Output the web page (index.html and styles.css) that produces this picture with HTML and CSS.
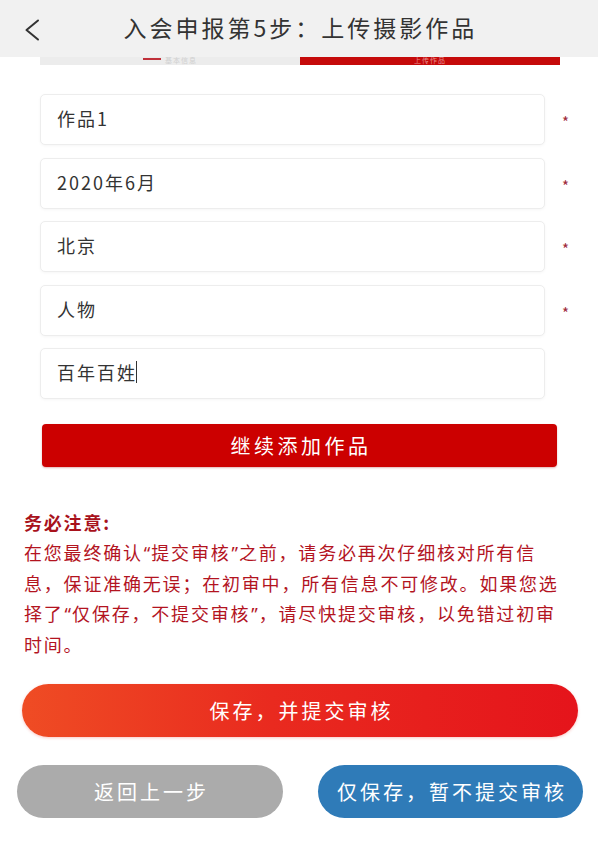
FILE: index.html
```html
<!DOCTYPE html>
<html lang="zh-CN">
<head>
<meta charset="utf-8">
<title>入会申报第5步：上传摄影作品</title>
<link rel="stylesheet" href="styles.css">
</head>
<body>
<header class="topbar">
  <span class="back">
    <svg width="16" height="22" viewBox="0 0 16 22"><polyline points="14,1.5 2.5,11 14,20.5" fill="none" stroke="#333" stroke-width="2" stroke-linecap="round" stroke-linejoin="round"/></svg>
  </span>
  <h1 class="title">入会申报第5步：上传摄影作品</h1>
</header>
<main class="page">
  <div class="tabs">
    <div class="tab tab-off"><span class="tab-mark"></span><span class="tab-label">基本信息</span></div>
    <div class="tab tab-on"><span class="tab-label">上传作品</span></div>
  </div>
  <form class="form">
    <div class="row"><div class="field">作品1</div><span class="req">*</span></div>
    <div class="row"><div class="field">2020年6月</div><span class="req">*</span></div>
    <div class="row"><div class="field">北京</div><span class="req">*</span></div>
    <div class="row"><div class="field">人物</div><span class="req">*</span></div>
    <div class="row"><div class="field">百年百姓<span class="caret"></span></div></div>
  </form>
  <div class="add-wrap"><button class="add-btn" type="button">继续添加作品</button></div>
  <section class="notice">
    <p class="notice-head">务必注意:</p>
    <p class="notice-body">
      <span class="line">在您最终确认<span class="q">“</span>提交审核<span class="q">”</span>之前，请务必再次仔细核对所有信</span>
      <span class="line">息，保证准确无误；在初审中，所有信息不可修改。如果您选</span>
      <span class="line">择了<span class="q">“</span>仅保存，不提交审核<span class="q">”</span>，请尽快提交审核，以免错过初审</span>
      <span class="line">时间。</span>
    </p>
  </section>
  <div class="main-wrap"><button class="pill primary" type="button">保存，并提交审核</button></div>
  <div class="pill-row">
    <button class="pill gray" type="button">返回上一步</button>
    <button class="pill blue" type="button">仅保存，暂不提交审核</button>
  </div>
</main>
</body>
</html>
```
FILE: styles.css
```css
* { box-sizing: border-box; }
html, body { margin: 0; padding: 0; background: #fff; }
body {
  font-family: "Noto Sans CJK SC", "Noto Sans", "Liberation Sans", sans-serif;
  color: #333;
  width: 598px;
  overflow: hidden;
}
.topbar {
  position: fixed;
  top: 0; left: 0; right: 0;
  height: 57px;
  background: #f1f1f1;
  z-index: 10;
  display: flex;
  align-items: center;
  justify-content: center;
}
.back {
  position: absolute;
  left: 24px;
  top: 19px;
  width: 16px;
  height: 22px;
  display: block;
}
.back svg { display: block; }
.title {
  margin: 0 0 2px 0;
  font-size: 23px;
  font-weight: 400;
  letter-spacing: 3px;
  color: #333;
  line-height: 1;
  padding-left: 3px;
}
.page { padding-top: 57px; }
.tabs {
  display: flex;
  margin: 0 38px 0 40px;
  height: 8px;
}
.tab {
  flex: 1;
  height: 8px;
  display: flex;
  justify-content: center;
  align-items: flex-start;
}
.tab-label {
  display: block;
  font-size: 7px;
  line-height: 7px;
  height: 7px;
  letter-spacing: 1px;
}
.tab-off { background: #ececec; color: #d0d0d0; }
.tab-on { background: #c50a0a; color: #e88e8e; }
.tab-mark {
  width: 18px; height: 2px;
  background: #c0303a;
  margin-right: 4px;
  margin-top: 1px;
  flex: none;
}
.form {
  margin: 29px 0 0 40px;
  display: flex;
  flex-direction: column;
  gap: 12.5px;
}
.row {
  display: flex;
  align-items: center;
}
.field {
  width: 505px;
  height: 51px;
  border: 1px solid #ededed;
  border-radius: 5px;
  background: #fff;
  box-shadow: 0 1px 3px rgba(0,0,0,0.04);
  display: flex;
  align-items: center;
  padding-left: 16px;
  padding-bottom: 3px;
  font-size: 18px;
  letter-spacing: 2px;
  color: #333;
}
.caret {
  display: inline-block;
  width: 1px;
  height: 22px;
  background: #333;
  margin-left: -1px;
}
.req {
  margin-left: 17px;
  font-size: 15px;
  color: #9e2a3a;
  line-height: 1;
  padding-top: 4px;
}
.add-wrap {
  margin: 25px 0 0 42px;
}
.add-btn {
  display: block;
  width: 515px;
  height: 43px;
  border: none;
  border-radius: 4px;
  background: #cc0000;
  color: #fff;
  font-family: inherit;
  font-size: 20px;
  letter-spacing: 3.5px;
  padding: 0 0 0 3px;
  box-shadow: 0 1px 2px rgba(160,0,0,0.3);
}
.notice {
  margin: 40px 0 0 24px;
  color: #b3141f;
  font-size: 18px;
  letter-spacing: 1.8px;
  line-height: 30px;
}
.notice p { margin: 0; }
.notice-head { font-weight: 700; color: #a8121c; }
.line { display: block; white-space: nowrap; }
.q { font-family: "Noto Sans", "Liberation Sans", sans-serif; letter-spacing: 0; padding: 0 1px; }
.main-wrap { margin: 25px 0 0 22px; }
.pill {
  display: block;
  height: 53px;
  border: none;
  border-radius: 27px;
  color: #fff;
  font-family: inherit;
  font-size: 20px;
  letter-spacing: 3px;
  padding: 0 0 0 3px;
}
.primary {
  width: 556px;
  background: linear-gradient(90deg, #ef4c24 0%, #e92a1f 45%, #e5141b 100%);
  box-shadow: 0 1px 3px rgba(230,40,30,0.25);
}
.pill-row {
  display: flex;
  justify-content: space-between;
  margin: 28px 15px 0 17px;
}
.gray { width: 266px; background: #ababab; }
.blue { width: 265px; background: #2f7bb8; }
```
